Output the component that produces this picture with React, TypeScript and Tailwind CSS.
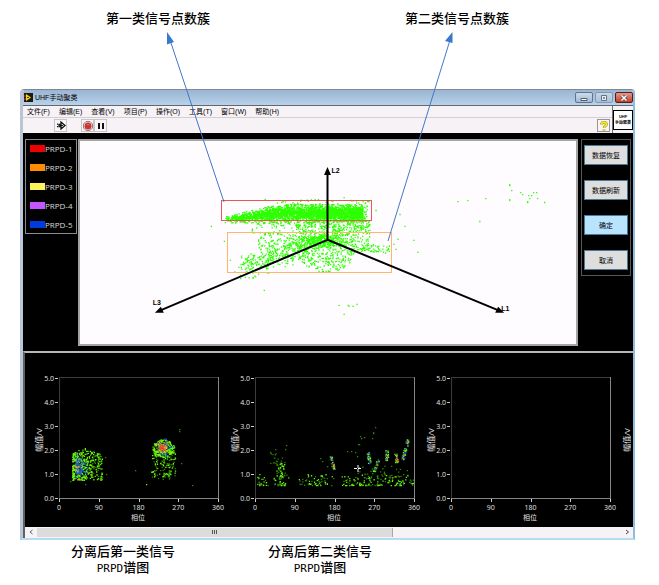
import type { ReactNode } from 'react'

type Point = [number, number]

function createRandom(seed: number) {
  let s = seed
  return () => {
    s = (s * 1664525 + 1013904223) % 4294967296
    return s / 4294967296
  }
}

function createGauss(rnd: () => number) {
  return () => {
    const g = Math.sqrt(-2 * Math.log(rnd() + 1e-9)) * Math.cos(2 * Math.PI * rnd())
    return Math.max(-2.4, Math.min(2.4, g))
  }
}

function dots(points: Point[]) {
  return points.map(([x, y]) => `M${x.toFixed(1)} ${y.toFixed(1)}h1.300v1.300h-1.300z`).join('')
}

function buildClusters(): Point[] {
  const rnd = createRandom(11)
  const gauss = createGauss(rnd)
  const pts: Point[] = []
  const add = (x: number, y: number) => pts.push([x, y])

  // dense upper band, thin on the left and thicker on the right
  for (let i = 0; i < 3000; i++) {
    const t = Math.pow(rnd(), 0.68)
    const x = 225 + t * 138
    const left = Math.max(0, 280 - x)
    add(x, 214 + left * 0.11 + gauss() * (1.5 + Math.min(1, t * 2.5) * 2.2))
  }
  for (let i = 0; i < 420; i++) add(262 + rnd() * 106, 213 + gauss() * 6)
  // region between the two groups
  for (let i = 0; i < 260; i++) add(296 + rnd() * 74, 221 + rnd() * 12)
  for (let i = 0; i < 45; i++) add(252 + rnd() * 46, 222 + rnd() * 14)
  // lower group
  for (let i = 0; i < 430; i++) add(324 + gauss() * 13, 241 + gauss() * 4)
  for (let i = 0; i < 240; i++) add(258 + rnd() * 112, 233 + rnd() * 17)
  for (let i = 0; i < 380; i++) {
    const t = rnd()
    add(241 + t * 72 + gauss() * 3, 268 - t * 24 + gauss() * 6)
  }
  for (let i = 0; i < 190; i++) {
    const a = rnd() * Math.PI
    const r = Math.sqrt(rnd())
    add(326 + Math.cos(a) * r * 29, 251 + Math.sin(a) * r * 22)
  }
  for (let i = 0; i < 55; i++) add(350 + rnd() * 29, 245 + rnd() * 8)
  for (let i = 0; i < 14; i++) add(378 + rnd() * 14, 246 + rnd() * 8)
  return pts
}

const outliers: Point[] = [
  [211, 227], [224, 242], [230, 261], [264, 291], [339, 306], [348, 306], [349, 307],
  [353, 307], [357, 305], [344, 315], [376, 211], [400, 215], [405, 227], [398, 240],
  [414, 241], [418, 253], [394, 245], [315, 200], [344, 198], [363, 202], [369, 202],
  [396, 250], [458, 202], [468, 201], [486, 199], [480, 222], [510, 185], [510, 186],
  [512, 191], [521, 193], [523, 195], [510, 200], [510, 201], [528, 202], [528, 203],
  [530, 199], [529, 196], [532, 196], [534, 193], [537, 193], [538, 199], [545, 203],
]

const clusterPath = dots([...buildClusters(), ...outliers])

type Layers = { green: string; lime: string; blue: string; hot: string; yellow: string }

function buildFirst(): Layers {
  const rnd = createRandom(5)
  const gauss = createGauss(rnd)
  const green: Point[] = [[11, 128], [26, 131], [46, 104], [47, 121], [76, 117], [133, 132]]
  const lime: Point[] = [[87, 131]]
  const blue: Point[] = []
  const hot: Point[] = []
  const yellow: Point[] = []
  for (let i = 0; i < 420; i++) {
    const x = 13 + Math.pow(rnd(), 1.5) * 30
    const top = 94 + Math.abs(x - 26) * 0.45
    const y = top + rnd() * (127 - top)
    ;(x > 33 && rnd() < 0.55 ? green : lime).push([x, y])
  }
  for (let i = 0; i < 90; i++) blue.push([20 + Math.abs(gauss()) * 5 - 4, 112 + gauss() * 6])
  for (let i = 0; i < 14; i++) yellow.push([18 + gauss() * 2, 114 + gauss() * 5])
  for (let i = 0; i < 150; i++) {
    const y = 97 + rnd() * 29
    const x = 92 + rnd() * 24
    ;(rnd() < 0.55 ? green : lime).push([x, y])
  }
  for (let i = 0; i < 190; i++) {
    const a = rnd() * Math.PI * 2
    const r = Math.sqrt(rnd())
    lime.push([104 + Math.cos(a) * r * 11, 95 + Math.sin(a) * r * 9])
  }
  for (let i = 0; i < 50; i++) blue.push([105 + gauss() * 4, 95 + gauss() * 4])
  for (let i = 0; i < 40; i++) yellow.push([103 + gauss() * 3, 94 + gauss() * 3])
  for (let i = 0; i < 26; i++) hot.push([103 + gauss() * 2, 94 + gauss() * 2])
  green.push([120, 76], [120, 78], [122, 110])
  return { green: dots(green), lime: dots(lime), blue: dots(blue), hot: dots(hot), yellow: dots(yellow) }
}

function buildSecond(): Layers {
  const rnd = createRandom(23)
  const gauss = createGauss(rnd)
  const green: Point[] = [
    [15, 99], [20, 96], [30, 96], [31, 92], [100, 99], [102, 103], [92, 98], [96, 98],
    [106, 85], [105, 83], [103, 91], [118, 79], [118, 80], [120, 74], [117, 85], [104, 91],
    [65, 105], [67, 108], [109, 84], [72, 113],
  ]
  const lime: Point[] = []
  const blue: Point[] = [[19, 131], [45, 131], [143, 130], [148, 131]]
  const hot: Point[] = []
  const yellow: Point[] = []
  // noise floor along the bottom, broken by short gaps
  for (let i = 0; i < 320; i++) {
    const x = 2 + rnd() * 156
    if ((x > 13 && x < 18) || (x > 31 && x < 43) || (x > 72 && x < 76) || (x > 79 && x < 86)) continue
    ;(rnd() < 0.5 ? green : lime).push([x, 132 - Math.pow(rnd(), 1.8) * 11])
  }
  for (let i = 0; i < 60; i++) (rnd() < 0.6 ? green : lime).push([26 + gauss() * 3, 109 + rnd() * 23])
  for (let i = 0; i < 18; i++) green.push([22 + gauss() * 4, 99 + rnd() * 14])
  for (let i = 0; i < 30; i++) green.push([102 + rnd() * 52, 112 + rnd() * 14])
  const streak = (x: number, y0: number, y1: number, lean: number, n: number) => {
    for (let i = 0; i < n; i++) {
      const t = rnd()
      const p: Point = [x + t * lean + rnd() * 3 - 2, y0 + t * (y1 - y0)]
      const k = rnd()
      ;(k < 0.4 ? lime : k < 0.7 ? green : k < 0.93 ? blue : yellow).push(p)
    }
  }
  streak(76, 103, 116, 3, 32)
  streak(113, 99, 111, 2, 34)
  streak(124, 106, 118, -5, 26)
  streak(132, 97, 108, 0, 34)
  streak(141, 100, 109, 1, 22)
  streak(153, 86, 106, -5, 60)
  hot.push([78, 111], [79, 113], [141, 105], [142, 107], [140, 106], [122, 112])
  yellow.push([77, 109], [78, 112], [141, 103], [131, 104], [113, 106])
  return { green: dots(green), lime: dots(lime), blue: dots(blue), hot: dots(hot), yellow: dots(yellow) }
}

const xTicks = [0, 90, 180, 270, 360]
const yTicks = [0, 1, 2, 3, 4, 5]

function AxisName() {
  return (
    <text x="5" y="87" textAnchor="middle" dominantBaseline="central" transform="rotate(-90 5 87)" fontSize="8">
      幅值/V
    </text>
  )
}

function PrpdChart({ layers, cursor = false }: { layers?: Layers; cursor?: boolean }) {
  return (
    <svg
      viewBox="0 0 196 174"
      className="h-[174px] w-[196px] shrink-0 font-['Open_Sans','Noto_Sans_CJK_SC',sans-serif] text-[7px]"
      fill="#e4e4e4"
    >
      <AxisName />
      <g shapeRendering="crispEdges">
        <path d="M26.5 145V24.5H185" fill="none" stroke="#3c3c3c" />
        <path d="M26 145.5H185.5V24" fill="none" stroke="#858585" />
        {yTicks.map((v) => (
          <rect key={v} x="22" y={145 - v * 24} width="3" height="1" fill="#d0d0d0" />
        ))}
        {xTicks.map((v) => (
          <rect key={v} x={26 + Math.round((v * 159) / 360)} y="146" width="1" height="3" fill="#d0d0d0" />
        ))}
      </g>
      {layers && (
        <g transform="translate(26 0)">
          <path d={layers.green} fill="#2d8505" />
          <path d={layers.lime} fill="#66f20a" />
          <path d={layers.blue} fill="#1450d8" />
          <path d={layers.yellow} fill="#f0b428" />
          <path d={layers.hot} fill="#f04a28" />
        </g>
      )}
      {cursor && <path d="M125 115.500h8M129 112v7" stroke="#fff" strokeDasharray="3 1" />}
      {yTicks.map((v) => (
        <text key={v} x="21" y={148 - v * 24} textAnchor="end">
          {v.toFixed(1)}
        </text>
      ))}
      {xTicks.map((v) => (
        <text key={v} x={26 + (v * 159) / 360} y="157" textAnchor="middle">
          {v}
        </text>
      ))}
      <text x="105" y="167" textAnchor="middle">
        相位
      </text>
    </svg>
  )
}

const first = buildFirst()
const second = buildSecond()

function ClusterView() {
  return (
    <svg viewBox="80 142 497 203" className="block w-full" role="img" aria-label="L1 L2 L3">
      <path d={clusterPath} fill="#2cff00" />
      <g fill="none" shapeRendering="crispEdges">
        <rect x="221.5" y="201.5" width="151" height="20" stroke="#ec5555" />
        <rect x="227.5" y="233.5" width="165" height="40" stroke="#ffb56b" />
      </g>
      <path d="M328 241V176M328 241L160 312M328 241L500 312" stroke="#000" strokeWidth="2" fill="none" />
      <path d="M328 168l3.500 8h-7zM155 314l6-6 3 6zM505 314l-6-6-3 6z" fill="#000" />
      <g fontSize="7" fontWeight="700">
        <text x="332" y="174">L2</text>
        <text x="153" y="306">L3</text>
        <text x="502" y="312">L1</text>
      </g>
    </svg>
  )
}

const menus = ['文件(F)', '编辑(E)', '查看(V)', '项目(P)', '操作(O)', '工具(T)', '窗口(W)', '帮助(H)']

const legend = [
  { name: 'PRPD-1', color: 'bg-[#f00000]' },
  { name: 'PRPD-2', color: 'bg-[#ff8c00]' },
  { name: 'PRPD-3', color: 'bg-[#fff55a]' },
  { name: 'PRPD-4', color: 'bg-[#c455ff]' },
  { name: 'PRPD-5', color: 'bg-[#003cdc]' },
]

const actions = [
  { name: '数据恢复', color: 'bg-[#dedede]' },
  { name: '数据刷新', color: 'bg-[#dedede]' },
  { name: '确定', color: 'bg-[#b8e4ff]' },
  { name: '取消', color: 'bg-[#dedede]' },
]

function ToolButton({ label, children }: { label: string; children: ReactNode }) {
  return (
    <button
      type="button"
      aria-label={label}
      className="flex h-[13px] w-[13px] items-center justify-center border border-[#c8c4c8] bg-[#f8f4f8]"
    >
      {children}
    </button>
  )
}

function TitleBar() {
  return (
    <div className="flex h-4 items-center border-b border-[#606870] bg-linear-to-b from-[#9ab4d2] to-[#b9d1ea] pl-px">
      <svg viewBox="0 0 9 9" className="h-[9px] w-[9px]">
        <path d="M0 0h9v9H0z" fill="#1c1c14" />
        <path d="M2 1l5 3.500L2 8z" fill="#f5d913" />
        <path d="M0 3h2M0 6h2" stroke="#e03020" />
        <path d="M3 4.500h2" stroke="#333" />
      </svg>
      <h1 className="ml-0.5 flex-1 text-[7px] leading-none">UHF手动聚类</h1>
      <div className="flex gap-0.5">
        <button type="button" aria-label="最小化" className="flex h-[11px] w-[18px] items-center justify-center rounded-xs border border-[#60748c] bg-linear-to-b from-[#cbdcec] to-[#a3bad3]">
          <svg viewBox="0 0 8 6" className="h-1.5 w-2"><path d="M1 3.500h6v2H1z" fill="#fff" stroke="#555f6e" /></svg>
        </button>
        <button type="button" aria-label="最大化" className="flex h-[11px] w-[18px] items-center justify-center rounded-xs border border-[#8399b2] bg-linear-to-b from-[#c5d8ea] to-[#a9c0d9]">
          <svg viewBox="0 0 8 6" className="h-1.5 w-2"><path d="M1.500.5h5v5h-5z" fill="#e8eef4" stroke="#66707f" /><path d="M3.500 2.500h1v1h-1z" fill="none" stroke="#66707f" /></svg>
        </button>
        <button type="button" aria-label="关闭" className="flex h-[11px] w-[18px] items-center justify-center rounded-xs border border-[#5c1a18] bg-linear-to-b from-[#e09a8c] to-[#c23a22]">
          <svg viewBox="0 0 8 6" className="h-1.5 w-2"><path d="M1.500.5l5 5M6.500.5l-5 5" stroke="#5b4444" strokeWidth="3" /><path d="M1.500.5l5 5M6.500.5l-5 5" stroke="#fff" strokeWidth="1.500" /></svg>
        </button>
      </div>
    </div>
  )
}

function Toolbars() {
  return (
    <div className="flex bg-[#f6f2f6]">
      <div className="flex-1">
        <nav className="flex h-3 items-center gap-[9px] border-b border-[#d2ced2] pl-1 text-[7px] leading-none">
          {menus.map((m) => (
            <button key={m} type="button" className="whitespace-nowrap">
              {m}
            </button>
          ))}
        </nav>
        <div className="flex h-[15px] items-center pl-[31px] pr-0.5">
          <ToolButton label="运行">
            <svg viewBox="0 0 10 9" className="h-[9px] w-2.5">
              <path d="M3 3.500h2V1l4 3.500L5 8V5.500H3z" fill="#fff" stroke="#111" strokeWidth="1.300" />
              <path d="M1 3.200h1M1 5.700h1M4 4.500h3" stroke="#111" strokeWidth="1.200" />
            </svg>
          </ToolButton>
          <div className="ml-3.5 flex">
            <ToolButton label="停止">
              <svg viewBox="0 0 10 10" className="h-2.5 w-2.5">
                <path d="M3 .5h4L9.500 3v4L7 9.500H3L.5 7V3z" fill="#f5dede" stroke="#9d8080" />
                <circle cx="5" cy="5" r="3.500" fill="#c93636" />
                <path d="M3 4a2.500 2 0 0 1 4 0z" fill="#e48c8c" />
              </svg>
            </ToolButton>
            <ToolButton label="暂停">
              <svg viewBox="0 0 8 8" className="h-2 w-2"><path d="M1 1h2v6H1zM5 1h2v6H5z" fill="#111" /></svg>
            </ToolButton>
          </div>
          <button type="button" aria-label="帮助" className="ml-auto flex h-[13px] w-[13px] items-center justify-center border border-[#989498] bg-[#f8f4f8]">
            <svg viewBox="0 0 8 10" className="h-2.5 w-2" fill="none">
              <path d="M1.500 3.500C1.500.5 6.500.5 6.500 3.200 6.500 5 4 4.800 4 6.800M4 8v1.500" stroke="#77772c" strokeWidth="2.600" />
              <path d="M1.500 3.500C1.500.5 6.500.5 6.500 3.200 6.500 5 4 4.800 4 6.800M4 8v1.500" stroke="#ffee18" strokeWidth="1.800" />
            </svg>
          </button>
        </div>
      </div>
      <div className="flex w-[21px] items-center border-l border-[#707070]">
        <div className="flex h-5 w-5 flex-col items-center justify-center border border-black bg-white text-[4px] font-bold leading-[6px]">
          <span>UHF</span>
          <span className="whitespace-nowrap">手动聚类</span>
        </div>
      </div>
    </div>
  )
}

function ScrollBar() {
  return (
    <div className="flex h-[11px] items-center bg-[#f6f2f6] text-[#555]">
      <button type="button" aria-label="向左" className="flex w-3 justify-center">
        <svg viewBox="0 0 4 6" className="h-1.5 w-1"><path d="M3.500 1L1 3l2.500 2" fill="none" stroke="#666" /></svg>
      </button>
      <div className="flex flex-1">
        <div className="flex h-[9px] w-[61%] items-center justify-center gap-px border-r border-[#a8a8a8] bg-[#dcdcdc]">
          <i className="h-1 w-px bg-[#555]" />
          <i className="h-1 w-px bg-[#555]" />
          <i className="h-1 w-px bg-[#555]" />
        </div>
      </div>
      <button type="button" aria-label="向右" className="flex w-3 justify-center">
        <svg viewBox="0 0 4 6" className="h-1.5 w-1"><path d="M1 1l2.500 2L1 5" fill="none" stroke="#444" /></svg>
      </button>
    </div>
  )
}

function Callouts() {
  return (
    <svg viewBox="0 0 659 250" className="pointer-events-none absolute left-0 top-0 w-full" stroke="#4478c8" fill="#3a78d0">
      <path d="M224 202L170 40M388 241L450 40" fill="none" />
      <path d="M167 32l7 10-7 2.500zM452.500 32l0 11-7.500-2z" stroke="none" />
    </svg>
  )
}

function Caption({ title }: { title: string }) {
  return (
    <p className="w-[106px] text-center">
      {title}
      <br />
      <span className="font-['DejaVu_Sans_Mono'] text-[11px]">PRPD</span>谱图
    </p>
  )
}

export default function App() {
  return (
    <main className="relative bg-white font-['Liberation_Sans','Noto_Sans_CJK_SC',sans-serif] text-black">
      <header className="flex h-[89px] gap-[195px] pl-[106px] pt-2.5 text-[13px] font-medium leading-[18px]">
        <p className="whitespace-nowrap">第一类信号点数簇</p>
        <p className="whitespace-nowrap">第二类信号点数簇</p>
      </header>

      <section className="ml-5 mr-6 overflow-hidden rounded-t-sm border-b-2 border-l-3 border-r-2 border-t border-b-[#b4def0] border-l-[#b8c4d8] border-r-[#8fbde0] border-t-[#808890]">
        <TitleBar />
        <Toolbars />
        <div className="flex items-start gap-px bg-black px-0.5 pb-[5px] pt-1.5">
          <ul className="flex w-[52px] shrink-0 flex-col gap-2 border border-[#8c8c8c] py-[3px] pl-1 font-['Open_Sans',sans-serif] text-[8px] text-[#dcdcdc]">
            {legend.map((item) => (
              <li key={item.name} className="flex h-[11px] items-center">
                <span className={`h-[7px] w-[15px] ${item.color}`} />
                {item.name}
              </li>
            ))}
          </ul>
          <div className="min-w-0 flex-1 border-2 border-[#a4a4a4] bg-[#fffcff]">
            <ClusterView />
          </div>
          <div className="ml-0.5 flex w-[50px] shrink-0 flex-col gap-[15px] border border-[#585858] px-0.5 py-[5px]">
            {actions.map((a) => (
              <button key={a.name} type="button" className={`h-5 whitespace-nowrap border border-[#4b7893] text-[7px] leading-none ${a.color}`}>
                {a.name}
              </button>
            ))}
          </div>
        </div>
        <div className="border-l-2 border-t-2 border-l-[#606060] border-t-[#b8b8b8] bg-black">
          <div className="flex overflow-hidden pl-2">
            <PrpdChart layers={first} />
            <PrpdChart layers={second} cursor />
            <PrpdChart />
            <svg
              viewBox="0 0 10 174"
              className="h-[174px] w-2.5 shrink-0 font-['Open_Sans','Noto_Sans_CJK_SC',sans-serif]"
              fill="#e4e4e4"
            >
              <AxisName />
            </svg>
          </div>
          <ScrollBar />
        </div>
      </section>

      <footer className="flex gap-[91px] pl-[70px] pt-1 text-[13px] font-medium leading-4">
        <Caption title="分离后第一类信号" />
        <Caption title="分离后第二类信号" />
      </footer>
      <Callouts />
    </main>
  )
}
